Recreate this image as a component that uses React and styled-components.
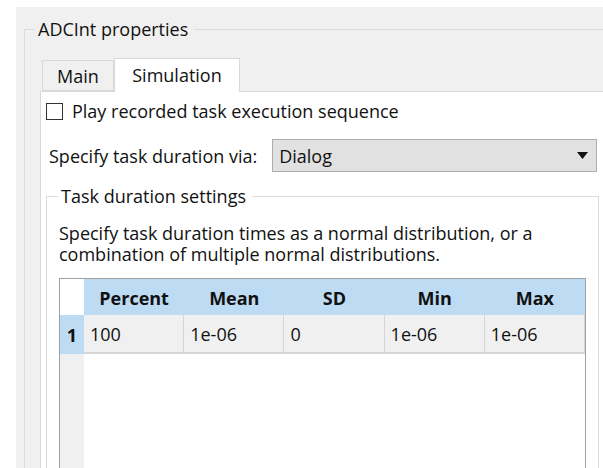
import React from 'react';
import styled, { createGlobalStyle } from 'styled-components';

const GlobalStyle = createGlobalStyle`
  html, body {
    margin: 0;
    padding: 0;
    background: #ffffff;
  }
  body {
    font-family: "Open Sans", "Noto Sans", sans-serif;
    font-size: 18px;
    color: #111;
  }
`;

const Screen = styled.div`
  padding: 7px 0 0 16px;
  height: 468px;
  box-sizing: border-box;
  overflow: hidden;
`;

const Window = styled.div`
  background: #f0f0f0;
  height: 461px;
  padding: 12px 0 0 8px;
  box-sizing: border-box;
  overflow: hidden;
`;

const Group = styled.fieldset`
  margin: ${(p) => p.$margin || '0'};
  padding: ${(p) => p.$padding || '0'};
  border: 1px solid #dcdcdc;
  min-width: 0;
  width: ${(p) => p.$width || 'auto'};
  box-sizing: border-box;
`;

const Legend = styled.legend`
  margin-left: ${(p) => p.$indent || 0}px;
  padding: 0 6px 0 3px;
  line-height: 20px;
  color: #111;
`;

const TabBar = styled.div`
  display: flex;
  align-items: flex-end;
  padding-left: 2px;
  position: relative;
  z-index: 1;
`;

const Tab = styled.div`
  box-sizing: border-box;
  border: 1px solid #d9d9d9;
  border-bottom: ${(p) => (p.$active ? 'none' : '1px solid #d9d9d9')};
  border-left: ${(p) => (p.$first || p.$active ? '1px solid #d9d9d9' : 'none')};
  background: ${(p) => (p.$active ? '#ffffff' : '#f0f0f0')};
  width: ${(p) => p.$width}px;
  height: ${(p) => (p.$active ? 34 : 31)}px;
  margin-bottom: ${(p) => (p.$active ? '-1px' : '0')};
  display: flex;
  align-items: center;
  justify-content: center;
  padding-bottom: ${(p) => (p.$active ? 2 : 0)}px;
`;

const Pane = styled.div`
  background: #ffffff;
  border: 1px solid #d9d9d9;
  height: 400px;
  padding-top: 10px;
  box-sizing: border-box;
`;

const CheckRow = styled.label`
  display: flex;
  align-items: center;
  gap: 9px;
  padding-left: 5px;
  height: 18px;
`;

const CheckBox = styled.span`
  width: 17px;
  height: 17px;
  box-sizing: border-box;
  border: 1px solid #333;
  background: #fff;
  flex: none;
`;

const FieldRow = styled.div`
  display: flex;
  align-items: center;
  gap: 15px;
  padding: 0 8px;
  margin-top: 19px;
`;

const Select = styled.div`
  flex: 1;
  height: 33px;
  box-sizing: border-box;
  border: 1px solid #adadad;
  background: #e1e1e1;
  display: flex;
  align-items: center;
  justify-content: space-between;
  padding: 0 8px 0 6px;
`;

const Description = styled.p`
  margin: 17px 0 0;
  line-height: 21px;
`;

const Table = styled.div`
  margin-top: 13px;
  border: 1px solid #a0a0a0;
  height: 220px;
  display: flex;
  flex-direction: column;
`;

const Row = styled.div`
  display: grid;
  grid-template-columns: 24px repeat(5, 1fr);
  height: ${(p) => p.$height}px;
  flex: ${(p) => (p.$fill ? 1 : 'none')};
`;

const HeadCell = styled.div`
  background: ${(p) => (p.$corner ? '#ffffff' : '#bddcf4')};
  font-weight: 700;
  display: flex;
  align-items: center;
  justify-content: center;
  padding-top: 2px;
`;

const RowHead = styled.div`
  background: ${(p) => (p.$blank ? '#f0f0f0' : '#bddcf4')};
  font-weight: 700;
  display: flex;
  align-items: center;
  justify-content: center;
`;

const Cell = styled.div`
  background: #f0f0f0;
  border-right: 1px solid #d6d6d6;
  border-bottom: 2px solid #d6d6d6;
  display: flex;
  align-items: center;
  padding-left: 6px;
`;

const Empty = styled.div`
  grid-column: span 5;
  background: #ffffff;
`;

const ArrowDown = () => (
  <svg width="11" height="7" viewBox="0 0 11 7">
    <path d="M0 0h11L5.5 7z" fill="#111" />
  </svg>
);

const headers = ['Percent', 'Mean', 'SD', 'Min', 'Max'];
const rows = [['100', '1e-06', '0', '1e-06', '1e-06']];

export default function App() {
  return (
    <>
      <GlobalStyle />
      <Screen>
        <Window>
          <Group $width="591px" $padding="19px 8px 0 15px">
            <Legend $indent={-5}>ADCInt properties</Legend>
            <TabBar>
              <Tab $first $width={72}>Main</Tab>
              <Tab $active $width={126}>Simulation</Tab>
            </TabBar>
            <Pane>
              <CheckRow>
                <CheckBox />
                Play recorded task execution sequence
              </CheckRow>
              <FieldRow>
                <span>Specify task duration via:</span>
                <Select>
                  <span>Dialog</span>
                  <ArrowDown />
                </Select>
              </FieldRow>
              <Group $margin="14px 6px 0 5px" $padding="0 12px 20px 12px">
                <Legend $indent={-1}>Task duration settings</Legend>
                <Description>
                  Specify task duration times as a normal distribution, or a
                  <br />
                  combination of multiple normal distributions.
                </Description>
                <Table>
                  <Row $height={36}>
                    <HeadCell $corner />
                    {headers.map((h) => (
                      <HeadCell key={h}>{h}</HeadCell>
                    ))}
                  </Row>
                  {rows.map((r, i) => (
                    <Row key={i} $height={39}>
                      <RowHead>{i + 1}</RowHead>
                      {r.map((v, j) => (
                        <Cell key={j}>{v}</Cell>
                      ))}
                    </Row>
                  ))}
                  <Row $fill>
                    <RowHead $blank />
                    <Empty />
                  </Row>
                </Table>
              </Group>
            </Pane>
          </Group>
        </Window>
      </Screen>
    </>
  );
}
